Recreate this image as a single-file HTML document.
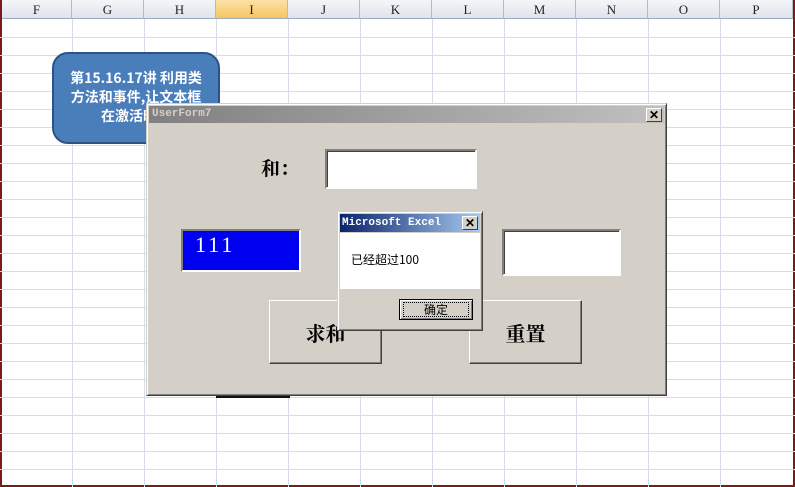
<!DOCTYPE html>
<html><head><meta charset="utf-8"><style>
*{margin:0;padding:0;box-sizing:border-box}
body{width:795px;height:487px;overflow:hidden;background:#fff;position:relative;font-family:"Liberation Sans","Noto Sans CJK SC",sans-serif}
.hdr{position:absolute;top:0;height:19px;background:linear-gradient(#f4f6f9,#dde3ec);border-right:1px solid #b1bccb;border-bottom:1px solid #9eabbd;font:13px "Liberation Serif",serif;text-align:center;line-height:19px;color:#222}
.vl{position:absolute;top:19px;bottom:0;width:1px;background:#d6dde9}
.hl{position:absolute;left:0;right:0;height:1px;background:#d6dde9}
.a{position:absolute}
.sunk{background:#fff;border:2px solid;border-color:#808080 #fff #fff #808080;box-shadow:inset 1px 1px 0 #404040}
.btn{background:#d4d0c8;border:1px solid;border-color:#fff #404040 #404040 #fff;box-shadow:inset -1px -1px 0 #808080;font:bold 20px "Noto Serif CJK SC",serif;display:flex;align-items:center;justify-content:center}
</style></head><body>
<div class="a" style="left:0;top:0;width:2px;height:487px;background:#7a1a1a"></div>
<div class="a" style="right:0;top:0;width:2px;height:487px;background:#7a1a1a"></div>
<div class="a" style="left:0;bottom:0;width:795px;height:2px;background:#7a1a1a"></div>
<div class="hdr" style="left:2px;width:70px">F</div>
<div class="hdr" style="left:72px;width:72px">G</div>
<div class="hdr" style="left:144px;width:72px">H</div>
<div class="hdr" style="left:216px;width:72px;background:linear-gradient(#fbe3a6,#f6c463)">I</div>
<div class="hdr" style="left:288px;width:72px">J</div>
<div class="hdr" style="left:360px;width:72px">K</div>
<div class="hdr" style="left:432px;width:72px">L</div>
<div class="hdr" style="left:504px;width:72px">M</div>
<div class="hdr" style="left:576px;width:72px">N</div>
<div class="hdr" style="left:648px;width:72px">O</div>
<div class="hdr" style="left:720px;width:73px">P</div>
<div class="vl" style="left:72px"></div><div class="vl" style="left:144px"></div><div class="vl" style="left:216px"></div><div class="vl" style="left:288px"></div><div class="vl" style="left:360px"></div><div class="vl" style="left:432px"></div><div class="vl" style="left:504px"></div><div class="vl" style="left:576px"></div><div class="vl" style="left:648px"></div><div class="vl" style="left:720px"></div>
<div class="hl" style="top:37px"></div><div class="hl" style="top:55px"></div><div class="hl" style="top:73px"></div><div class="hl" style="top:91px"></div><div class="hl" style="top:109px"></div><div class="hl" style="top:127px"></div><div class="hl" style="top:145px"></div><div class="hl" style="top:163px"></div><div class="hl" style="top:181px"></div><div class="hl" style="top:199px"></div><div class="hl" style="top:217px"></div><div class="hl" style="top:235px"></div><div class="hl" style="top:253px"></div><div class="hl" style="top:271px"></div><div class="hl" style="top:289px"></div><div class="hl" style="top:307px"></div><div class="hl" style="top:325px"></div><div class="hl" style="top:343px"></div><div class="hl" style="top:361px"></div><div class="hl" style="top:379px"></div><div class="hl" style="top:397px"></div><div class="hl" style="top:415px"></div><div class="hl" style="top:433px"></div><div class="hl" style="top:451px"></div><div class="hl" style="top:469px"></div>

<div class="a" style="left:52px;top:52px;width:168px;height:92px;background:#4a7ebb;border:2px solid #2c5382;border-radius:16px;color:#fff;font:bold 14px 'Noto Sans CJK SC',sans-serif;text-align:center;line-height:19px;padding-top:15px">第15.16.17讲 利用类<br>方法和事件,让文本框<br>在激活时改</div>

<div class="a" style="left:216px;top:394px;width:74px;height:4px;background:#111"></div>
<div class="a" style="left:146px;top:103px;width:521px;height:293px;background:#d4d0c8;border:1px solid;border-color:#d4d0c8 #404040 #404040 #d4d0c8;box-shadow:inset 1px 1px 0 #fff,inset -1px -1px 0 #808080">
 <div class="a" style="left:2px;top:2px;right:2px;height:17px;background:linear-gradient(90deg,#808080,#c0c0c0);color:#d4d0c8;font:bold 11px 'Liberation Mono',monospace;line-height:17px;padding-left:3px">UserForm7</div>
 <div class="a" style="right:4px;top:4px;width:16px;height:14px;background:#d4d0c8;border:1px solid;border-color:#fff #404040 #404040 #fff;font:bold 12px sans-serif;line-height:12px;text-align:center">✕</div>
 <div class="a" style="left:114px;top:50px;font:bold 19px 'Noto Serif CJK SC',serif">和：</div>
 <div class="a sunk" style="left:178px;top:45px;width:152px;height:40px"></div>
 <div class="a" style="left:34px;top:125px;width:120px;height:43px;background:#0000f0;border:2px solid;border-color:#808080 #fff #fff #808080;color:#fff;font:22px 'Liberation Serif',serif;letter-spacing:3px;padding:1px 0 0 12px">111</div>
 <div class="a sunk" style="left:355px;top:125px;width:119px;height:47px"></div>
 <div class="a btn" style="left:122px;top:196px;width:113px;height:64px">求和</div>
 <div class="a btn" style="left:322px;top:196px;width:113px;height:64px">重置</div>
</div>

<div class="a" style="left:337px;top:211px;width:146px;height:120px;background:#d4d0c8;border:1px solid;border-color:#d4d0c8 #404040 #404040 #d4d0c8;box-shadow:inset 1px 1px 0 #fff,inset -1px -1px 0 #808080">
 <div class="a" style="left:2px;top:2px;right:2px;height:18px;background:linear-gradient(90deg,#0a246a,#a6caf0);color:#fff;font:bold 11px 'Liberation Mono',monospace;line-height:18px;padding-left:2px">Microsoft Excel</div>
 <div class="a" style="right:4px;top:4px;width:16px;height:14px;background:#d4d0c8;border:1px solid;border-color:#fff #404040 #404040 #fff;font:bold 12px sans-serif;line-height:12px;text-align:center">✕</div>
 <div class="a" style="left:2px;top:21px;right:2px;height:56px;background:#fff;font:12px 'Noto Sans CJK SC',sans-serif;padding:18px 0 0 11px">已经超过100</div>
 <div class="a" style="left:61px;top:87px;width:74px;height:21px;border:1px solid #000;background:#d4d0c8;box-shadow:inset 1px 1px 0 #fff,inset -1px -1px 0 #808080;font:12px 'Noto Sans CJK SC',sans-serif;text-align:center;line-height:18px"><span style="display:inline-block;width:66px;border:1px dotted #000;line-height:13px;margin-top:2px">确定</span></div>
</div>
</body></html>
